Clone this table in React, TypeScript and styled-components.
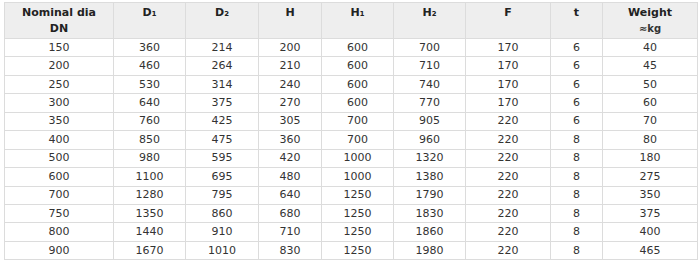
import React from "react";
import styled, { createGlobalStyle } from "styled-components";

const Global = createGlobalStyle`
  body { margin: 0; background: #fff; }
`;

const Wrap = styled.div`
  padding: 2px 3px 0 4px;
`;

const Table = styled.table`
  border-collapse: collapse;
  table-layout: fixed;
  width: 693px;
  font-family: "DejaVu Sans", Verdana, sans-serif;
  font-size: 11px;
  color: #333;
`;

const Th = styled.th`
  background: #eeeeee;
  border: 1px solid #dcdcdc;
  font-weight: bold;
  color: #222;
  text-align: center;
  vertical-align: top;
  height: 36px;
  padding: 2px 2px 0;
  line-height: 16px;
  box-sizing: border-box;
`;

const Unit = styled.span`
  font-size: 10px;
  font-weight: bold;
  color: #333;
`;

const Td = styled.td`
  border: 1px solid #dcdcdc;
  text-align: center;
  height: 18.45px;
  padding: 0 2px;
  line-height: 16px;
  box-sizing: border-box;
`;

const widths = [109, 72, 73, 63, 72, 72, 85, 52, 95];

const rows = [
  [150, 360, 214, 200, 600, 700, 170, 6, 40],
  [200, 460, 264, 210, 600, 710, 170, 6, 45],
  [250, 530, 314, 240, 600, 740, 170, 6, 50],
  [300, 640, 375, 270, 600, 770, 170, 6, 60],
  [350, 760, 425, 305, 700, 905, 220, 6, 70],
  [400, 850, 475, 360, 700, 960, 220, 8, 80],
  [500, 980, 595, 420, 1000, 1320, 220, 8, 180],
  [600, 1100, 695, 480, 1000, 1380, 220, 8, 275],
  [700, 1280, 795, 640, 1250, 1790, 220, 8, 350],
  [750, 1350, 860, 680, 1250, 1830, 220, 8, 375],
  [800, 1440, 910, 710, 1250, 1860, 220, 8, 400],
  [900, 1670, 1010, 830, 1250, 1980, 220, 8, 465],
];

export default function App() {
  return (
    <>
      <Global />
      <Wrap>
        <Table>
          <colgroup>
            {widths.map((w, i) => (
              <col key={i} style={{ width: w }} />
            ))}
          </colgroup>
          <thead>
            <tr>
              <Th>Nominal dia<br />DN</Th>
              <Th>D₁</Th>
              <Th>D₂</Th>
              <Th>H</Th>
              <Th>H₁</Th>
              <Th>H₂</Th>
              <Th>F</Th>
              <Th>t</Th>
              <Th>Weight<br /><Unit>≈kg</Unit></Th>
            </tr>
          </thead>
          <tbody>
            {rows.map((r, i) => (
              <tr key={i}>
                {r.map((v, j) => (
                  <Td key={j}>{v}</Td>
                ))}
              </tr>
            ))}
          </tbody>
        </Table>
      </Wrap>
    </>
  );
}
